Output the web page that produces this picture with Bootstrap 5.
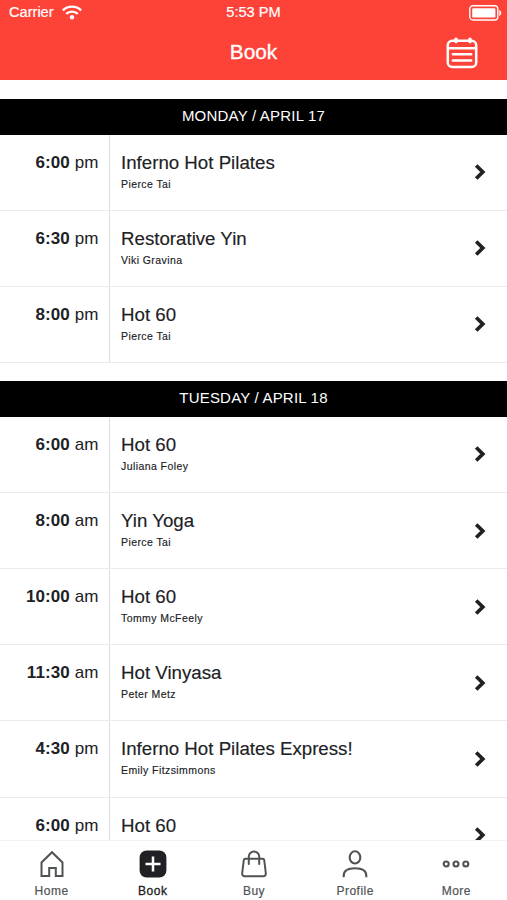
<!DOCTYPE html>
<html lang="en">
<head>
<meta charset="utf-8">
<meta name="viewport" content="width=device-width, initial-scale=1">
<title>Book</title>
<link href="https://cdn.jsdelivr.net/npm/bootstrap@5.3.0/dist/css/bootstrap.min.css" rel="stylesheet">
<style>
body{font-family:"Liberation Sans",Arial,sans-serif;color:#202124;background:#fff;height:900px;line-height:1.2}
svg{display:block;flex:none}
.app-head{height:80px;background:#fd4238;color:#fff}
.status-bar{height:25px;font-size:14.6px;display:grid;grid-template-columns:1fr auto 1fr;padding:0 5px 0 9px;-webkit-text-stroke:.2px #fff}
.status-bar .clock{margin-left:-4px}
.title-bar{height:55px;display:grid;grid-template-columns:1fr auto 1fr;padding:0 29px}
.title-bar h1{font-size:20.8px;font-weight:400;-webkit-text-stroke:.35px #fff}
.day{margin-top:18px}
.day:first-child{margin-top:18.5px}
.day-title{height:36px;background:#000;color:#fff;font-size:15px;letter-spacing:.2px;font-weight:400;padding-bottom:1px}
.session{height:76.15px;border-bottom:1px solid #e9ebec}
.session-time{width:110px;border-right:1px solid #dcdfe1;padding:18px 10.5px 0 0;font-size:17px;letter-spacing:.1px}
.session-info{padding:16px 0 0 11px;-webkit-text-stroke:.15px #202124}
.session-name{font-size:18.7px;line-height:23px;font-weight:400}
.session-coach{font-size:10.5px;letter-spacing:.42px;line-height:12px;margin-top:4px}
.chev{margin-right:21px}
.tabs{height:60px;border-top:1px solid #f3f3f3;background:#fff;padding-left:1px}
.tab-item{width:101.2px;font-size:12px;letter-spacing:.5px;padding-top:8px;color:#505356;text-decoration:none;-webkit-text-stroke:.2px #505356}
.tab-item span{margin-top:5px;line-height:15px}
.tab-item.current{color:#202124;-webkit-text-stroke:.3px #202124}
</style>
</head>
<body class="d-flex flex-column overflow-hidden">
<svg class="d-none"><symbol id="chevron" viewBox="0 0 12 18"><path d="M2.2 2.5 8.8 9l-6.6 6.5" fill="none" stroke="#202124" stroke-width="3.7"/></symbol></svg>
<header class="app-head flex-shrink-0">
  <div class="status-bar align-items-center">
    <div class="d-flex align-items-center"><span>Carrier</span>
      <svg class="ms-2" width="20" height="15" viewBox="0 0 20 15"><g fill="none" stroke="#fff" stroke-width="2.3"><path d="M.8 5.4a13.2 13.2 0 0 1 18.4 0"/><path d="M4.2 8.9a8.4 8.4 0 0 1 11.6 0"/></g><circle cx="10" cy="12.2" r="2.2" fill="#fff"/></svg>
    </div>
    <span class="clock">5:53 PM</span>
    <svg class="ms-auto" width="33" height="16" viewBox="0 0 33 16"><rect x=".8" y=".8" width="28" height="14.2" rx="3.2" fill="none" stroke="#fff" stroke-width="1.4"/><rect x="3.2" y="3.2" width="23.2" height="9.4" rx="1.2" fill="#fff"/><path d="M30.3 5v6c2.6-.8 2.6-5.2 0-6Z" fill="#fff"/></svg>
  </div>
  <div class="title-bar align-items-center">
    <span></span><h1 class="m-0">Book</h1>
    <svg class="ms-auto" width="32" height="32" viewBox="0 0 32 32" fill="none" stroke="#fff" stroke-width="2.5" stroke-linecap="round"><rect x="1.8" y="3.8" width="28.4" height="26.2" rx="4.5"/><path d="M2 11.2h28M6.800 17.200h18.400M6.800 23.400h18.400"/><path d="M10 2.400v2.200M24 2.400v2.200" stroke-width="3.600"/></svg>
  </div>
</header>
<main class="flex-grow-1 overflow-hidden" id="schedule"></main>
<nav class="tabs d-flex flex-shrink-0">
  <a class="tab-item d-flex flex-column align-items-center"><svg width="28" height="30" viewBox="0 0 28 30" fill="none" stroke="#505356" stroke-width="2"><path d="M3.500 27V13.500L14 3.200 24.500 13.500v13.500h-6.700v-8h-6.600v8Z"/></svg><span>Home</span></a>
  <a class="tab-item current d-flex flex-column align-items-center"><svg width="28" height="30" viewBox="0 0 28 30"><rect x=".6" y="1.500" width="26.800" height="27" rx="7" fill="#202124"/><path d="M14 7.500v15M6.500 15h15" stroke="#fff" stroke-width="2.500"/></svg><span>Book</span></a>
  <a class="tab-item d-flex flex-column align-items-center"><svg width="28" height="30" viewBox="0 0 28 30" fill="none" stroke="#505356" stroke-width="2" stroke-linecap="round" stroke-linejoin="round"><path d="M5.300 9.700h17.400q1.300 0 1.500 1.300l1.600 13q.3 3.200-2.600 3.200H4.800Q1.900 27.200 2.200 24L3.800 11Q4 9.700 5.300 9.700ZM8.800 15V7.600a5.200 5.200 0 0 1 10.400 0V15"/></svg><span>Buy</span></a>
  <a class="tab-item d-flex flex-column align-items-center"><svg width="28" height="30" viewBox="0 0 28 30" fill="none" stroke="#505356" stroke-width="2.100"><ellipse cx="14" cy="8.400" rx="5.300" ry="6.100"/><path d="M2.700 28.300v-1.500C2.700 21.500 7 19.300 14 19.300s11.300 2.200 11.300 7.500v1.500"/></svg><span>Profile</span></a>
  <a class="tab-item d-flex flex-column align-items-center"><svg width="28" height="30" viewBox="0 0 28 30" fill="none" stroke="#505356" stroke-width="2.100"><circle cx="4.200" cy="15" r="2.500"/><circle cx="14" cy="15" r="2.500"/><circle cx="23.800" cy="15" r="2.500"/></svg><span>More</span></a>
</nav>
<script>
const days = [
  ["MONDAY / APRIL 17", [["6:00","pm","Inferno Hot Pilates","Pierce Tai"],["6:30","pm","Restorative Yin","Viki Gravina"],["8:00","pm","Hot 60","Pierce Tai"]]],
  ["TUESDAY / APRIL 18", [["6:00","am","Hot 60","Juliana Foley"],["8:00","am","Yin Yoga","Pierce Tai"],["10:00","am","Hot 60","Tommy McFeely"],["11:30","am","Hot Vinyasa","Peter Metz"],["4:30","pm","Inferno Hot Pilates Express!","Emily Fitzsimmons"],["6:00","pm","Hot 60",""]]]
];
document.getElementById("schedule").innerHTML = days.map(([title, rows]) => `
<section class="day"><h2 class="day-title d-flex align-items-center justify-content-center m-0">${title}</h2>
${rows.map(([t, half, name, coach]) => `<div class="session d-flex">
<div class="session-time text-end flex-shrink-0"><b>${t}</b> ${half}</div>
<div class="session-info flex-grow-1"><h3 class="session-name m-0">${name}</h3><div class="session-coach">${coach}</div></div>
<svg class="chev align-self-center" width="12" height="18"><use href="#chevron"/></svg></div>`).join("")}
</section>`).join("");
</script>
<script src="https://cdn.jsdelivr.net/npm/bootstrap@5.3.0/dist/js/bootstrap.bundle.min.js"></script>
</body>
</html>
